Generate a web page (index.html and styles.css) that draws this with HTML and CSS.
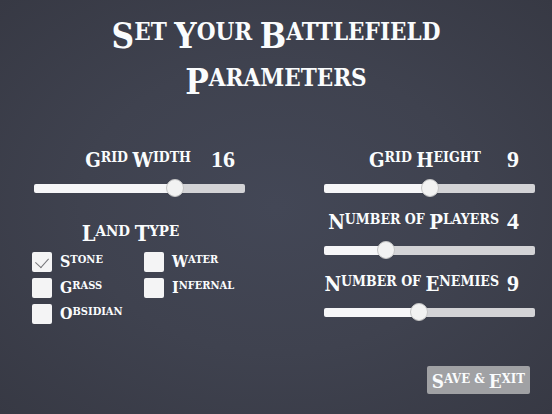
FILE: index.html
```
<!DOCTYPE html>
<html lang="en">

<head>
  <meta charset="UTF-8">
  <meta name="viewport" content="width=device-width, initial-scale=1.0">
  <title>Set Your Battlefield Parameters</title>
  <link rel="stylesheet" href="styles.css">
</head>

<body>
  <h1 class="title">
    <span class="word">Set</span> <span class="word">Your</span> <span class="word">Battlefield</span><br>
    <span class="word">Parameters</span>
  </h1>

  <form class="settings">
    <div class="columns">
      <div class="column">
        <div class="slider">
          <div class="slider-head short">
            <label for="width"><span class="word">Grid</span> <span class="word">Width</span></label>
            <output for="width">16</output>
          </div>
          <input type="range" id="width" min="3" max="22" value="16">
        </div>

        <fieldset class="land">
          <legend><span class="word">Land</span> <span class="word">Type</span></legend>
          <div class="options">
            <label class="option"><input type="checkbox" name="land" checked><span class="word">Stone</span></label>
            <label class="option"><input type="checkbox" name="land"><span class="word">Water</span></label>
            <label class="option"><input type="checkbox" name="land"><span class="word">Grass</span></label>
            <label class="option"><input type="checkbox" name="land"><span class="word">Infernal</span></label>
            <label class="option"><input type="checkbox" name="land"><span class="word">Obsidian</span></label>
          </div>
        </fieldset>
      </div>

      <div class="column">
        <div class="slider">
          <div class="slider-head short">
            <label for="height"><span class="word">Grid</span> <span class="word">Height</span></label>
            <output for="height">9</output>
          </div>
          <input type="range" id="height" min="3" max="15" value="9">
        </div>
        <div class="slider">
          <div class="slider-head">
            <label for="players"><span class="word">Number</span> of <span class="word">Players</span></label>
            <output for="players">4</output>
          </div>
          <input type="range" id="players" min="1" max="12" value="4">
        </div>
        <div class="slider">
          <div class="slider-head">
            <label for="enemies"><span class="word">Number</span> of <span class="word">Enemies</span></label>
            <output for="enemies">9</output>
          </div>
          <input type="range" id="enemies" min="1" max="19" value="9">
        </div>
      </div>
    </div>

    <div class="actions">
      <button type="button" class="save"><span class="word">Save</span> <span class="word">&amp;</span> <span class="word">Exit</span></button>
    </div>
  </form>

  <script>
    // keep the number and the filled part of the track in step with the thumb
    function update(range) {
      const filled = (range.value - range.min) / (range.max - range.min) * 100
      range.style.setProperty('--filled', filled + '%')
      document.querySelector('output[for=' + range.id + ']').textContent = range.value
    }

    document.querySelectorAll('input[type=range]').forEach(range => {
      update(range)
      range.addEventListener('input', () => update(range))
    })
  </script>
</body>

</html>
```
FILE: styles.css
```
* {
  box-sizing: border-box;
}

body {
  display: flex;
  flex-direction: column;
  min-height: 100vh;
  margin: 0;
  padding: 9px 17px 20px;
  font-family: "DejaVu Serif Condensed", "DejaVu Serif", serif;
  font-stretch: condensed;
  font-weight: bold;
  text-transform: uppercase;
  color: #fafcfd;
  background: radial-gradient(ellipse at center, #434756 0%, #3f424f 50%, #373944 100%);
}

/* big initial that hangs below the rest of the word */
.word {
  display: inline-block;
}

.word::first-letter {
  font-size: 1.45em;
  line-height: 0;
  vertical-align: -0.24em;
}

.title {
  margin: 0 0 44px;
  font-size: 24px;
  line-height: 46px;
  text-align: center;
}

.settings {
  display: flex;
  flex: 1;
  flex-direction: column;
  justify-content: space-between;
  padding-left: 17px;
}

.columns {
  display: grid;
  grid-template-columns: repeat(2, minmax(0, 1fr));
  gap: 79px;
}

.column {
  display: flex;
  flex-direction: column;
  gap: 10px;
}

/* sliders */
.slider-head {
  display: flex;
  justify-content: flex-end;
  gap: 2px;
  height: 24px;
  padding-right: 10px;
  font-size: 14px;
  line-height: 24px;
  white-space: nowrap;
}

.slider-head.short {
  gap: 20px;
}

.slider-head output {
  width: 24px;
  font-family: "Liberation Serif", serif;
  font-size: 24px;
  line-height: 28px;
  text-align: center;
}

input {
  margin: 0;
  appearance: none;
}

input[type=range] {
  display: block;
  width: 100%;
  height: 18px;
  margin-top: 10px;
  background: none;
}

input[type=range]::-webkit-slider-runnable-track {
  height: 9px;
  border-radius: 2px;
  background: linear-gradient(to right, #f6f6f8 var(--filled), #d3d3d6 var(--filled));
}

input[type=range]::-webkit-slider-thumb {
  appearance: none;
  width: 18px;
  height: 18px;
  margin-top: -5px;
  border: 1px solid #c4c4c4;
  border-radius: 50%;
  background: #f2f2f2;
}

/* land type */
.land {
  margin: 10px 0 0;
  padding: 0;
  border: 0;
}

.land legend {
  width: 100%;
  padding: 0 18px 0 0;
  font-size: 15px;
  line-height: 28px;
  text-align: center;
}

.options {
  display: grid;
  grid-template-columns: 112px 1fr;
  row-gap: 6px;
  margin: 7px 0 0 -2px;
}

.option {
  display: flex;
  gap: 8px;
  font-size: 11px;
  line-height: 16px;
}

.option input {
  display: flex;
  justify-content: center;
  width: 20px;
  height: 20px;
  border-radius: 2px;
  background: #f4f4f5;
}

.option input:checked::after {
  content: "";
  width: 7px;
  height: 11px;
  margin-top: 3px;
  border: solid #77777b;
  border-width: 0 1px 1px 0;
  transform: rotate(42deg);
}

.actions {
  display: flex;
  justify-content: flex-end;
  padding-right: 5px;
}

.save {
  height: 28px;
  padding: 0 5px 2px;
  border: 0;
  border-radius: 2px;
  font: inherit;
  font-size: 13px;
  line-height: 24px;
  text-transform: inherit;
  color: inherit;
  background: #a0a1a4;
}
```
